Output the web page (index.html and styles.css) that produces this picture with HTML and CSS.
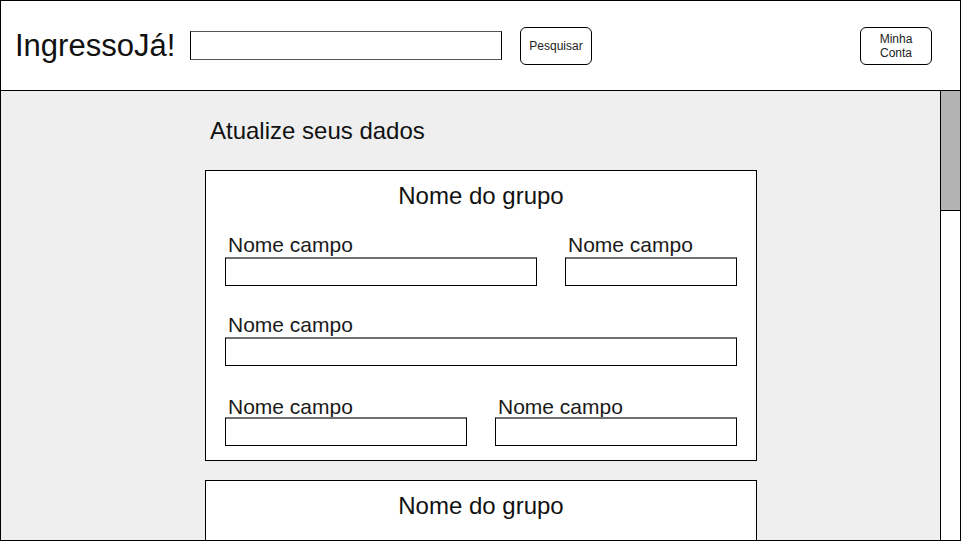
FILE: index.html
```html
<!DOCTYPE html>
<html lang="pt-BR">
<head>
<meta charset="utf-8">
<title>IngressoJá!</title>
<link rel="stylesheet" href="styles.css">
</head>
<body>
<div class="app">
  <header class="topbar">
    <div class="logo">IngressoJá!</div>
    <div class="search"></div>
    <div class="btn btn-search">Pesquisar</div>
    <div class="spacer"></div>
    <div class="btn btn-account">Minha<br>Conta</div>
  </header>
  <div class="main">
    <div class="content">
      <h1 class="heading">Atualize seus dados</h1>
      <section class="card">
        <h2 class="card-title">Nome do grupo</h2>
        <div class="row row-1">
          <div class="field w312"><div class="label">Nome campo</div><div class="input"></div></div>
          <div class="field w172"><div class="label">Nome campo</div><div class="input"></div></div>
        </div>
        <div class="row row-2">
          <div class="field grow"><div class="label">Nome campo</div><div class="input"></div></div>
        </div>
        <div class="row row-3">
          <div class="field grow"><div class="label">Nome campo</div><div class="input"></div></div>
          <div class="field grow"><div class="label">Nome campo</div><div class="input"></div></div>
        </div>
      </section>
      <section class="card">
        <h2 class="card-title">Nome do grupo</h2>
      </section>
    </div>
    <div class="scrollbar"><div class="thumb"></div></div>
  </div>
</div>
</body>
</html>
```

FILE: styles.css
```css
html, body {
  margin: 0;
  padding: 0;
  background: #fff;
}
body {
  font-family: "Liberation Sans", Arial, sans-serif;
  color: #1a1a1a;
}
.app {
  width: 961px;
  height: 541px;
  box-sizing: border-box;
  border: 1px solid #000;
  display: flex;
  flex-direction: column;
  overflow: hidden;
  background: #fff;
}
.topbar {
  flex: none;
  height: 90px;
  box-sizing: border-box;
  border-bottom: 1px solid #000;
  display: flex;
  align-items: center;
  padding: 0 28px 0 14px;
}
.logo {
  width: 175px;
  font-size: 31px;
  line-height: 36px;
  color: #111;
  white-space: nowrap;
}
.search {
  width: 312px;
  height: 29px;
  box-sizing: border-box;
  border: 1px solid #000;
  border-top-color: #555;
  border-bottom-color: #555;
  background: #fff;
  margin-right: 18px;
}
.btn {
  width: 72px;
  height: 38px;
  box-sizing: border-box;
  border: 1px solid #000;
  border-radius: 6px;
  display: flex;
  align-items: center;
  justify-content: center;
  text-align: center;
  font-size: 12px;
  line-height: 14px;
  color: #222;
  background: #fff;
}
.spacer {
  flex: 1;
}
.main {
  flex: 1;
  min-height: 0;
  display: flex;
  background: #efefef;
}
.content {
  flex: 1;
  min-width: 0;
  padding-left: 204px;
  overflow: hidden;
}
.heading {
  margin: 25px 0 24px 5px;
  font-size: 24px;
  line-height: 30px;
  font-weight: normal;
  color: #111;
}
.card {
  width: 552px;
  box-sizing: border-box;
  border: 1px solid #000;
  background: #fff;
  padding: 10px 19px 14px;
  margin-bottom: 19px;
}
.card-title {
  margin: 0 0 22px;
  text-align: center;
  font-size: 24px;
  line-height: 30px;
  font-weight: normal;
  color: #111;
}
.row {
  display: flex;
  gap: 28px;
}
.row-1 {
  margin-bottom: 27px;
}
.row-2 {
  margin-bottom: 29px;
}
.field {
  display: flex;
  flex-direction: column;
}
.w312 {
  width: 312px;
}
.w172 {
  width: 172px;
}
.grow {
  flex: 1;
}
.label {
  padding-left: 3px;
  font-size: 21px;
  line-height: 24px;
  color: #1a1a1a;
  white-space: nowrap;
  margin-bottom: 0;
}
.row-3 .label {
  margin-bottom: -2px;
}
.input {
  height: 29px;
  box-sizing: border-box;
  border: 1px solid #000;
  border-top: 2px solid #707070;
  background: #fff;
}
.scrollbar {
  width: 19px;
  flex: none;
  border-left: 1px solid #000;
  background: #fff;
}
.thumb {
  height: 119px;
  background: #b3b3b3;
  border-bottom: 1px solid #000;
}
```
